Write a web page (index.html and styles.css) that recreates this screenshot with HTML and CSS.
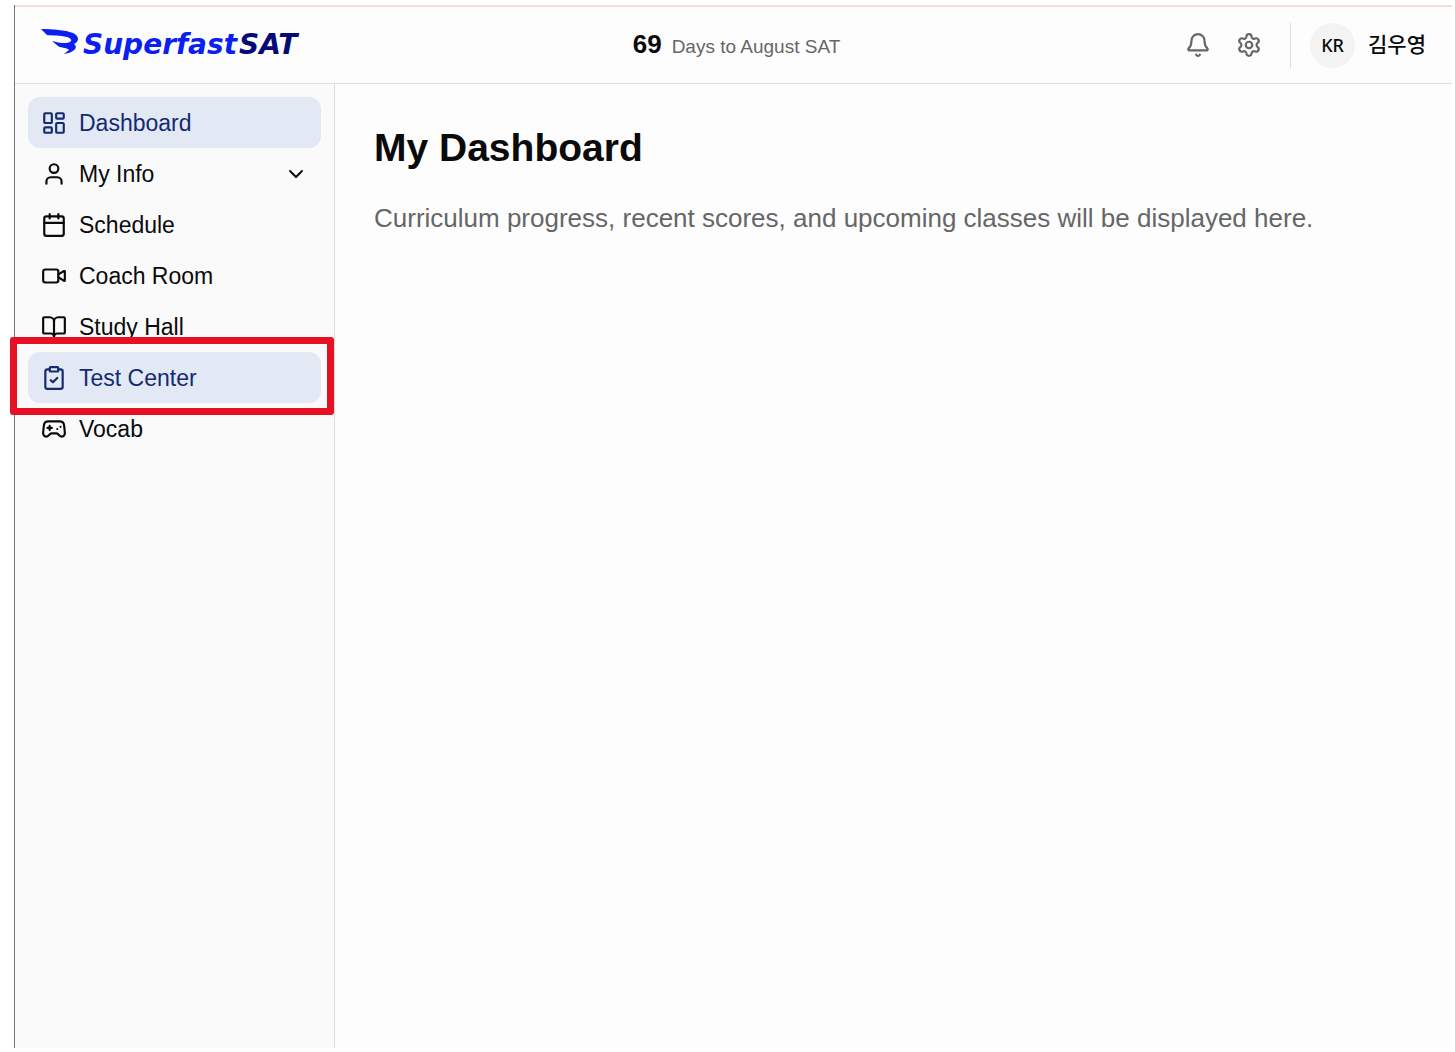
FILE: index.html
```html
<!DOCTYPE html>
<html lang="en">
<head>
<meta charset="utf-8">
<meta name="viewport" content="width=device-width, initial-scale=1">
<title>My Dashboard - Superfast SAT</title>
<link rel="stylesheet" href="styles.css">
</head>
<body>
<div class="app">
  <header class="topbar">
    <a class="brand" href="#" aria-label="Superfast SAT">
      <svg class="brand-mark" viewBox="0 0 38 26" aria-hidden="true">
        <path d="M0 0C12 0 24 1 32 4C38 7 39 12 33 15C38 19 32 24 23 25L28 21C26 18 18 19 17 17L11 12C18 14 25 15 29 13C32 11 29 9 26 8C19 6 11 7 6 6Z"/>
      </svg>
      <span class="brand-name"><span>Superfast</span> <span class="brand-sat">SAT</span></span>
    </a>
    <p class="countdown"><strong>69</strong><span>Days to August SAT</span></p>
    <div class="tools">
      <button class="icon-button" type="button" aria-label="Notifications">
        <svg class="icon" viewBox="0 0 24 24"><path d="M10.268 21a2 2 0 0 0 3.464 0"/><path d="M3.262 15.326A1 1 0 0 0 4 17h16a1 1 0 0 0 .74-1.673C19.41 13.956 18 12.499 18 8A6 6 0 0 0 6 8c0 4.499-1.411 5.956-2.738 7.326"/></svg>
      </button>
      <button class="icon-button" type="button" aria-label="Settings">
        <svg class="icon" viewBox="0 0 24 24"><path d="M9.671 4.136a2.34 2.34 0 0 1 4.659 0 2.34 2.34 0 0 0 3.319 1.915 2.34 2.34 0 0 1 2.33 4.033 2.34 2.34 0 0 0 0 3.831 2.34 2.34 0 0 1-2.33 4.033 2.34 2.34 0 0 0-3.319 1.915 2.34 2.34 0 0 1-4.659 0 2.34 2.34 0 0 0-3.32-1.915 2.34 2.34 0 0 1-2.33-4.033 2.34 2.34 0 0 0 0-3.831A2.34 2.34 0 0 1 6.35 6.051a2.34 2.34 0 0 0 3.319-1.915"/><circle cx="12" cy="12" r="3"/></svg>
      </button>
      <button class="profile" type="button">
        <span class="avatar">KR</span>
        <span class="profile-name" lang="ko">김우영</span>
      </button>
    </div>
  </header>
  <div class="body">
    <nav class="sidebar" aria-label="Main">
      <a class="nav-item active" href="#" aria-current="page">
        <svg class="icon" viewBox="0 0 24 24"><rect width="7" height="9" x="3" y="3" rx="1"/><rect width="7" height="5" x="14" y="3" rx="1"/><rect width="7" height="9" x="14" y="12" rx="1"/><rect width="7" height="5" x="3" y="16" rx="1"/></svg>
        <span>Dashboard</span>
      </a>
      <button class="nav-item" type="button" aria-expanded="false">
        <svg class="icon" viewBox="0 0 24 24"><path d="M19 21v-2a4 4 0 0 0-4-4H9a4 4 0 0 0-4 4v2"/><circle cx="12" cy="7" r="4"/></svg>
        <span>My Info</span>
        <svg class="chevron" viewBox="0 0 24 24"><path d="m6 9 6 6 6-6"/></svg>
      </button>
      <a class="nav-item" href="#">
        <svg class="icon" viewBox="0 0 24 24"><path d="M8 2v4M16 2v4M3 10h18"/><rect width="18" height="18" x="3" y="4" rx="2"/></svg>
        <span>Schedule</span>
      </a>
      <a class="nav-item" href="#">
        <svg class="icon" viewBox="0 0 24 24"><path d="m16 13 5.223 3.482a.5.5 0 0 0 .777-.416V7.87a.5.5 0 0 0-.752-.432L16 10.5"/><rect x="2" y="6" width="14" height="12" rx="2"/></svg>
        <span>Coach Room</span>
      </a>
      <a class="nav-item" href="#">
        <svg class="icon" viewBox="0 0 24 24"><path d="M12 7v14"/><path d="M3 18a1 1 0 0 1-1-1V4a1 1 0 0 1 1-1h5a4 4 0 0 1 4 4 4 4 0 0 1 4-4h5a1 1 0 0 1 1 1v13a1 1 0 0 1-1 1h-6a3 3 0 0 0-3 3 3 3 0 0 0-3-3z"/></svg>
        <span>Study Hall</span>
      </a>
      <a class="nav-item active highlighted" href="#">
        <svg class="icon" viewBox="0 0 24 24"><rect width="8" height="4" x="8" y="2" rx="1"/><path d="M16 4h2a2 2 0 0 1 2 2v14a2 2 0 0 1-2 2H6a2 2 0 0 1-2-2V6a2 2 0 0 1 2-2h2"/><path d="m9 14 2 2 4-4"/></svg>
        <span>Test Center</span>
      </a>
      <a class="nav-item" href="#">
        <svg class="icon" viewBox="0 0 24 24"><path d="M6 11h4M8 9v4M15 12h.01M18 10h.01"/><path d="M17.32 5H6.68a4 4 0 0 0-3.978 3.59c-.006.052-.01.101-.017.152C2.604 9.416 2 14.456 2 16a3 3 0 0 0 3 3c1 0 1.5-.5 2-1l1.414-1.414A2 2 0 0 1 9.828 16h4.344a2 2 0 0 1 1.414.586L17 18c.5.5 1 1 2 1a3 3 0 0 0 3-3c0-1.545-.604-6.584-.685-7.258-.007-.05-.011-.1-.017-.151A4 4 0 0 0 17.32 5z"/></svg>
        <span>Vocab</span>
      </a>
    </nav>
    <main class="content">
      <h1>My Dashboard</h1>
      <p>Curriculum progress, recent scores, and upcoming classes will be displayed here.</p>
    </main>
  </div>
</div>
</body>
</html>
```
FILE: styles.css
```css
* {
  box-sizing: border-box;
}

body {
  margin: 0;
  padding: 5px 3px 4px 14px;
  min-height: 100vh;
  display: flex;
  background: #fff;
  color: #0a0a0a;
  font-family: "Liberation Sans", "Noto Sans CJK KR", sans-serif;
  font-size: 23px;
  line-height: 32px;
}

h1,
p {
  margin: 0;
}

a {
  color: inherit;
  text-decoration: none;
}

button {
  border: 0;
  padding: 0;
  background: none;
  color: inherit;
  font: inherit;
  cursor: pointer;
}

.app {
  flex: 1;
  display: flex;
  flex-direction: column;
  border-left: 1px solid #777;
  background: #fdfdfd;
}

.topbar {
  display: grid;
  grid-template-columns: 1fr auto 1fr;
  align-items: center;
  height: 79px;
  padding: 0 26px;
  border-top: 2px solid #f6dcd2;
  border-bottom: 1px solid #dedede;
}

.brand {
  display: flex;
  align-items: center;
  gap: 4px;
}

.brand-mark {
  width: 38px;
  height: 26px;
  margin-bottom: 6px;
  fill: #0a1ff0;
}

.brand-name {
  display: flex;
  gap: 2px;
  color: #0a1ff0;
  font-family: "DejaVu Sans", sans-serif;
  font-size: 28px;
  font-style: italic;
  font-weight: 700;
  white-space: nowrap;
}

.brand-sat {
  color: #050a78;
}

.countdown {
  display: flex;
  align-items: baseline;
  gap: 10px;
  padding-left: 6px;
  color: #666;
  font-size: 19px;
}

.countdown strong {
  color: #0a0a0a;
  font-size: 26px;
}

.tools {
  display: flex;
  align-items: center;
  justify-content: flex-end;
}

.icon,
.chevron {
  flex: none;
  width: 26px;
  height: 26px;
  fill: none;
  stroke: currentColor;
  stroke-width: 2;
  stroke-linecap: round;
  stroke-linejoin: round;
}

.icon-button {
  display: grid;
  place-items: center;
  width: 51px;
  height: 51px;
  color: #666;
}

.profile {
  display: flex;
  align-items: center;
  gap: 13px;
  margin-left: 16px;
  padding-left: 19px;
  border-left: 1px solid #dedede;
}

.avatar {
  display: grid;
  place-items: center;
  width: 45px;
  height: 45px;
  border-radius: 50%;
  background: #f3f3f3;
  font-family: "Noto Sans", sans-serif;
  font-size: 18px;
  font-weight: 500;
}

.profile-name {
  font-size: 21px;
  font-weight: 500;
}

.body {
  flex: 1;
  display: flex;
}

.sidebar {
  flex: none;
  width: 320px;
  padding: 13px;
  border-right: 1px solid #dedede;
  background: #fafafa;
}

.nav-item {
  position: relative;
  display: flex;
  align-items: center;
  gap: 12px;
  width: 100%;
  height: 51px;
  padding: 0 13px;
  border-radius: 12px;
  text-align: left;
}

.active {
  background: #e2e8f4;
  color: #142b6f;
}

.chevron {
  width: 24px;
  height: 24px;
  margin-left: auto;
}

.highlighted::after {
  content: "";
  position: absolute;
  inset: -15px -13px -12px -18px;
  border: 7px solid #e81123;
  border-radius: 3px;
}

.content {
  flex: 1;
  padding: 40px 39px;
}

.content h1 {
  font-size: 39px;
  font-weight: 700;
  line-height: 48px;
}

.content p {
  margin-top: 30px;
  color: #666;
  font-size: 26px;
}
```
